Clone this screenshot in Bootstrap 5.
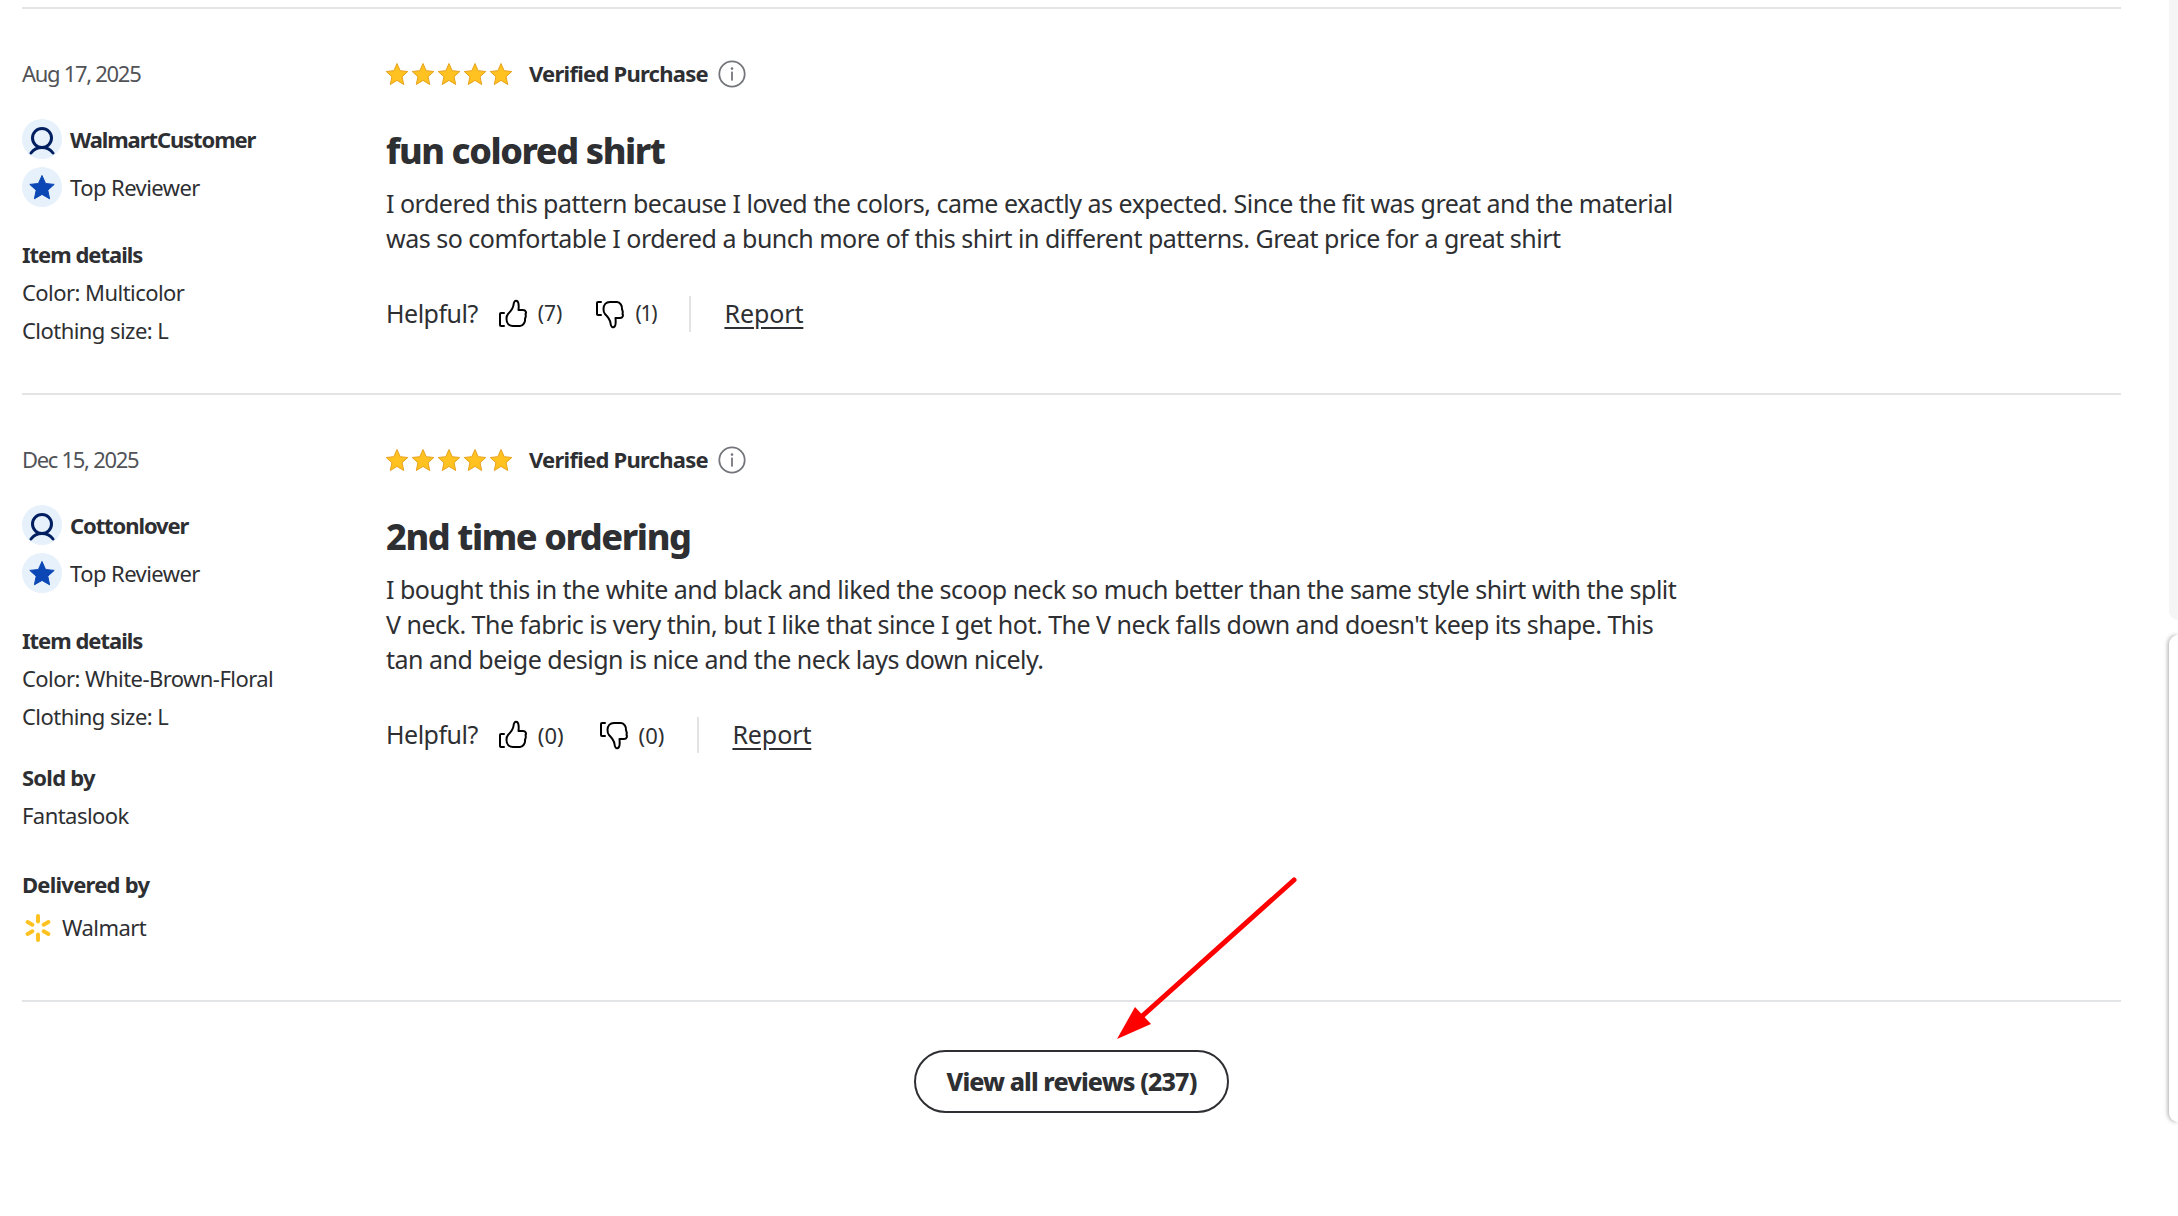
<!DOCTYPE html>
<html lang="en">
<head>
<meta charset="utf-8">
<title>Reviews</title>
<link href="https://cdn.jsdelivr.net/npm/bootstrap@5.3.0/dist/css/bootstrap.min.css" rel="stylesheet">
<style>
html,body{height:1216px;overflow:hidden;background:#fff}
body{font-family:"Noto Sans",sans-serif;color:#2e2f32;position:relative;-webkit-font-smoothing:antialiased}
.rv-page{width:2099px;margin-left:22px;padding-top:7px}
.rv-item{border-top:2px solid #e3e4e5;padding-top:49px;padding-bottom:47px}
.rv-item-tall{padding-bottom:57px}
.rv-left{width:364px;flex:none;font-size:22px;line-height:31px;letter-spacing:-.55px}
.rv-right{flex:1;min-width:0}
.rv-date{color:#515357;margin-bottom:30px;letter-spacing:-1.3px}
.rv-badge-row{height:40px;gap:8px}
.rv-circle{width:40px;height:40px;background:#e6f1fc;border-radius:50%;flex:none}
.rv-strong{font-weight:700;letter-spacing:-.75px}
.rv-name{letter-spacing:-1.1px}
.rv-head{margin-top:32px;letter-spacing:-1px}
.rv-detail{margin-top:7px}
.rv-gap-a{margin-top:30px}
.rv-gap-b{margin-top:38px}
.rv-walmart{margin-top:12px;gap:10px;padding-left:2px}
.rv-stars-row{height:31px}
.rv-stars{gap:2px;margin-right:16px;margin-left:-1px}
.rv-verified{font-size:22px;font-weight:700;letter-spacing:-.75px;line-height:31px;margin-right:10px}
.rv-title{font-size:36px;font-weight:800;line-height:46px;letter-spacing:-1.4px;margin:39px 0 12px;color:#2e2f32}
.rv-body{font-size:25px;line-height:35px;letter-spacing:-.5px;width:1320px;margin:0}
.rv-help{margin-top:40px;height:36px;font-size:25px;letter-spacing:-.5px}
.rv-helpful{margin-right:20px}
.rv-count{font-size:21px;letter-spacing:0;margin-left:10px}
.rv-count-wide{font-size:22px}
.rv-count-narrow{letter-spacing:-1.2px}
.rv-gap33{margin-left:33px}
.rv-gap35{margin-left:35px}
.rv-sep{width:2px;height:36px;background:#e3e4e5}
.rv-report{color:#2e2f32;text-decoration:underline;text-underline-offset:4px;letter-spacing:-.1px}
.rv-foot{border-top:2px solid #e3e4e5;padding-top:48px}
.rv-btn{--bs-btn-padding-x:0;--bs-btn-padding-y:0;width:315px;height:63px;border:2px solid #2e2f32;color:#2e2f32;background:#fff;font-size:25px;font-weight:800;letter-spacing:-.9px;line-height:1}
.rv-flip{transform:scaleY(-1)}
.rv-arrow{position:absolute;left:1100px;top:870px;pointer-events:none}
.rv-edge-grey{position:absolute;right:0;top:0;width:9px;height:620px;background:#f5f5f6;border-bottom-left-radius:14px}
.rv-edge-card{position:absolute;right:0;top:635px;width:9px;height:487px;background:#fff;border-radius:14px 0 0 14px;box-shadow:-1px 0 4px rgba(0,0,0,.35)}
</style>
</head>
<body>
<svg width="0" height="0" class="position-absolute">
  <defs>
    <symbol id="ic-star" viewBox="0 0 24 24"><path d="M12 1.500l3.200 7.200 7.600.8-5.700 5.200 1.600 7.800L12 18.400 5.300 22.500l1.600-7.800L1.200 9.500l7.600-.8z" fill="#ffc220" stroke="#e8a21e" stroke-width="1" stroke-linejoin="round"/></symbol>
    <symbol id="ic-info" viewBox="0 0 28 28"><circle cx="14" cy="14" r="12.700" fill="none" stroke="#74767c" stroke-width="1.800"/><circle cx="14" cy="8.600" r="1.300" fill="#74767c"/><rect x="13.100" y="11.600" width="1.800" height="9" fill="#74767c"/></symbol>
    <symbol id="ic-user" viewBox="0 0 40 40"><circle cx="20" cy="19" r="9.500" fill="none" stroke="#001e60" stroke-width="3"/><path d="M9 34c2.500-3.500 7-5.500 11-5.500S28.500 30.500 31 34" fill="none" stroke="#001e60" stroke-width="3" stroke-linecap="round"/></symbol>
    <symbol id="ic-bstar" viewBox="0 0 40 40"><path d="M20 8.500l3.600 8 8.600.9-6.400 5.800 1.800 8.600L20 27.400l-7.600 4.400 1.800-8.600-6.400-5.800 8.600-.9z" fill="#0b47b5" stroke="#0b47b5" stroke-width="1" stroke-linejoin="round"/></symbol>
    <symbol id="ic-thumb" viewBox="0 0 30 30"><g fill="none" stroke="#000" stroke-width="2" stroke-linecap="round" stroke-linejoin="round"><path d="M6 14H3Q2 14 2 15V26Q2 27 3 27H6"/><path d="M10 15C12 13 15 10 15.500 6 15.700 3 17 1 19 2 21 3 21 6 20.500 11H25C28 11 28.500 14 27.500 15 28.500 18 27 19 27 20 27.500 23 25 27 22 27H15C11 27 8.500 24 8.500 20 8.500 18 9 16 10 15Z"/></g></symbol>
    <symbol id="ic-spark" viewBox="0 0 28 28"><g fill="#ffc220"><rect x="12" y="0" width="4" height="9.500" rx="2"/><rect x="12" y="0" width="4" height="9.500" rx="2" transform="rotate(60 14 14)"/><rect x="12" y="0" width="4" height="9.500" rx="2" transform="rotate(120 14 14)"/><rect x="12" y="0" width="4" height="9.500" rx="2" transform="rotate(180 14 14)"/><rect x="12" y="0" width="4" height="9.500" rx="2" transform="rotate(240 14 14)"/><rect x="12" y="0" width="4" height="9.500" rx="2" transform="rotate(300 14 14)"/></g></symbol>
  </defs>
</svg>

<main class="rv-page">

  <section class="rv-item d-flex">
    <div class="rv-left">
      <div class="rv-date">Aug 17, 2025</div>
      <div class="d-flex flex-column gap-2">
        <div class="d-flex align-items-center rv-badge-row"><span class="rv-circle"><svg width="40" height="40"><use href="#ic-user"/></svg></span><span class="rv-strong rv-name">WalmartCustomer</span></div>
        <div class="d-flex align-items-center rv-badge-row"><span class="rv-circle"><svg width="40" height="40"><use href="#ic-bstar"/></svg></span><span>Top Reviewer</span></div>
      </div>
      <div class="rv-strong rv-head">Item details</div>
      <div class="rv-detail">Color: Multicolor</div>
      <div class="rv-detail">Clothing size: L</div>
    </div>
    <div class="rv-right">
      <div class="d-flex align-items-center rv-stars-row">
        <div class="d-flex rv-stars"><svg width="24" height="24"><use href="#ic-star"/></svg><svg width="24" height="24"><use href="#ic-star"/></svg><svg width="24" height="24"><use href="#ic-star"/></svg><svg width="24" height="24"><use href="#ic-star"/></svg><svg width="24" height="24"><use href="#ic-star"/></svg></div>
        <span class="rv-verified">Verified Purchase</span>
        <svg width="28" height="28"><use href="#ic-info"/></svg>
      </div>
      <h3 class="rv-title">fun colored shirt</h3>
      <p class="rv-body">I ordered this pattern because I loved the colors, came exactly as expected. Since the fit was great and the material<br>was so comfortable I ordered a bunch more of this shirt in different patterns. Great price for a great shirt</p>
      <div class="d-flex align-items-center rv-help">
        <span class="rv-helpful">Helpful?</span>
        <svg width="30" height="30"><use href="#ic-thumb"/></svg><span class="rv-count">(7)</span>
        <svg width="30" height="30" class="rv-flip rv-gap33"><use href="#ic-thumb"/></svg><span class="rv-count rv-count-narrow">(1)</span>
        <span class="rv-sep rv-gap33"></span>
        <a href="#" class="rv-report rv-gap33">Report</a>
      </div>
    </div>
  </section>

  <section class="rv-item rv-item-tall d-flex">
    <div class="rv-left">
      <div class="rv-date">Dec 15, 2025</div>
      <div class="d-flex flex-column gap-2">
        <div class="d-flex align-items-center rv-badge-row"><span class="rv-circle"><svg width="40" height="40"><use href="#ic-user"/></svg></span><span class="rv-strong rv-name">Cottonlover</span></div>
        <div class="d-flex align-items-center rv-badge-row"><span class="rv-circle"><svg width="40" height="40"><use href="#ic-bstar"/></svg></span><span>Top Reviewer</span></div>
      </div>
      <div class="rv-strong rv-head">Item details</div>
      <div class="rv-detail">Color: White-Brown-Floral</div>
      <div class="rv-detail">Clothing size: L</div>
      <div class="rv-strong rv-gap-a">Sold by</div>
      <div class="rv-detail">Fantaslook</div>
      <div class="rv-strong rv-gap-b">Delivered by</div>
      <div class="d-flex align-items-center rv-walmart"><svg width="28" height="28"><use href="#ic-spark"/></svg><span>Walmart</span></div>
    </div>
    <div class="rv-right">
      <div class="d-flex align-items-center rv-stars-row">
        <div class="d-flex rv-stars"><svg width="24" height="24"><use href="#ic-star"/></svg><svg width="24" height="24"><use href="#ic-star"/></svg><svg width="24" height="24"><use href="#ic-star"/></svg><svg width="24" height="24"><use href="#ic-star"/></svg><svg width="24" height="24"><use href="#ic-star"/></svg></div>
        <span class="rv-verified">Verified Purchase</span>
        <svg width="28" height="28"><use href="#ic-info"/></svg>
      </div>
      <h3 class="rv-title">2nd time ordering</h3>
      <p class="rv-body">I bought this in the white and black and liked the scoop neck so much better than the same style shirt with the split<br>V neck. The fabric is very thin, but I like that since I get hot. The V neck falls down and doesn't keep its shape. This<br>tan and beige design is nice and the neck lays down nicely.</p>
      <div class="d-flex align-items-center rv-help">
        <span class="rv-helpful">Helpful?</span>
        <svg width="30" height="30"><use href="#ic-thumb"/></svg><span class="rv-count rv-count-wide">(0)</span>
        <svg width="30" height="30" class="rv-flip rv-gap35"><use href="#ic-thumb"/></svg><span class="rv-count rv-count-wide">(0)</span>
        <span class="rv-sep rv-gap33"></span>
        <a href="#" class="rv-report rv-gap33">Report</a>
      </div>
    </div>
  </section>

  <div class="rv-foot d-flex justify-content-center">
    <button type="button" class="btn rv-btn rounded-pill">View all reviews (237)</button>
  </div>
</main>

<svg class="rv-arrow" width="210" height="180" viewBox="1100 870 210 180">
  <line x1="1294" y1="880" x2="1140" y2="1018" stroke="#fe0000" stroke-width="5" stroke-linecap="round"/>
  <polygon points="1117,1039 1135,1007 1151,1024" fill="#fe0000"/>
</svg>
<div class="rv-edge-grey"></div>
<div class="rv-edge-card"></div>
</body>
</html>
